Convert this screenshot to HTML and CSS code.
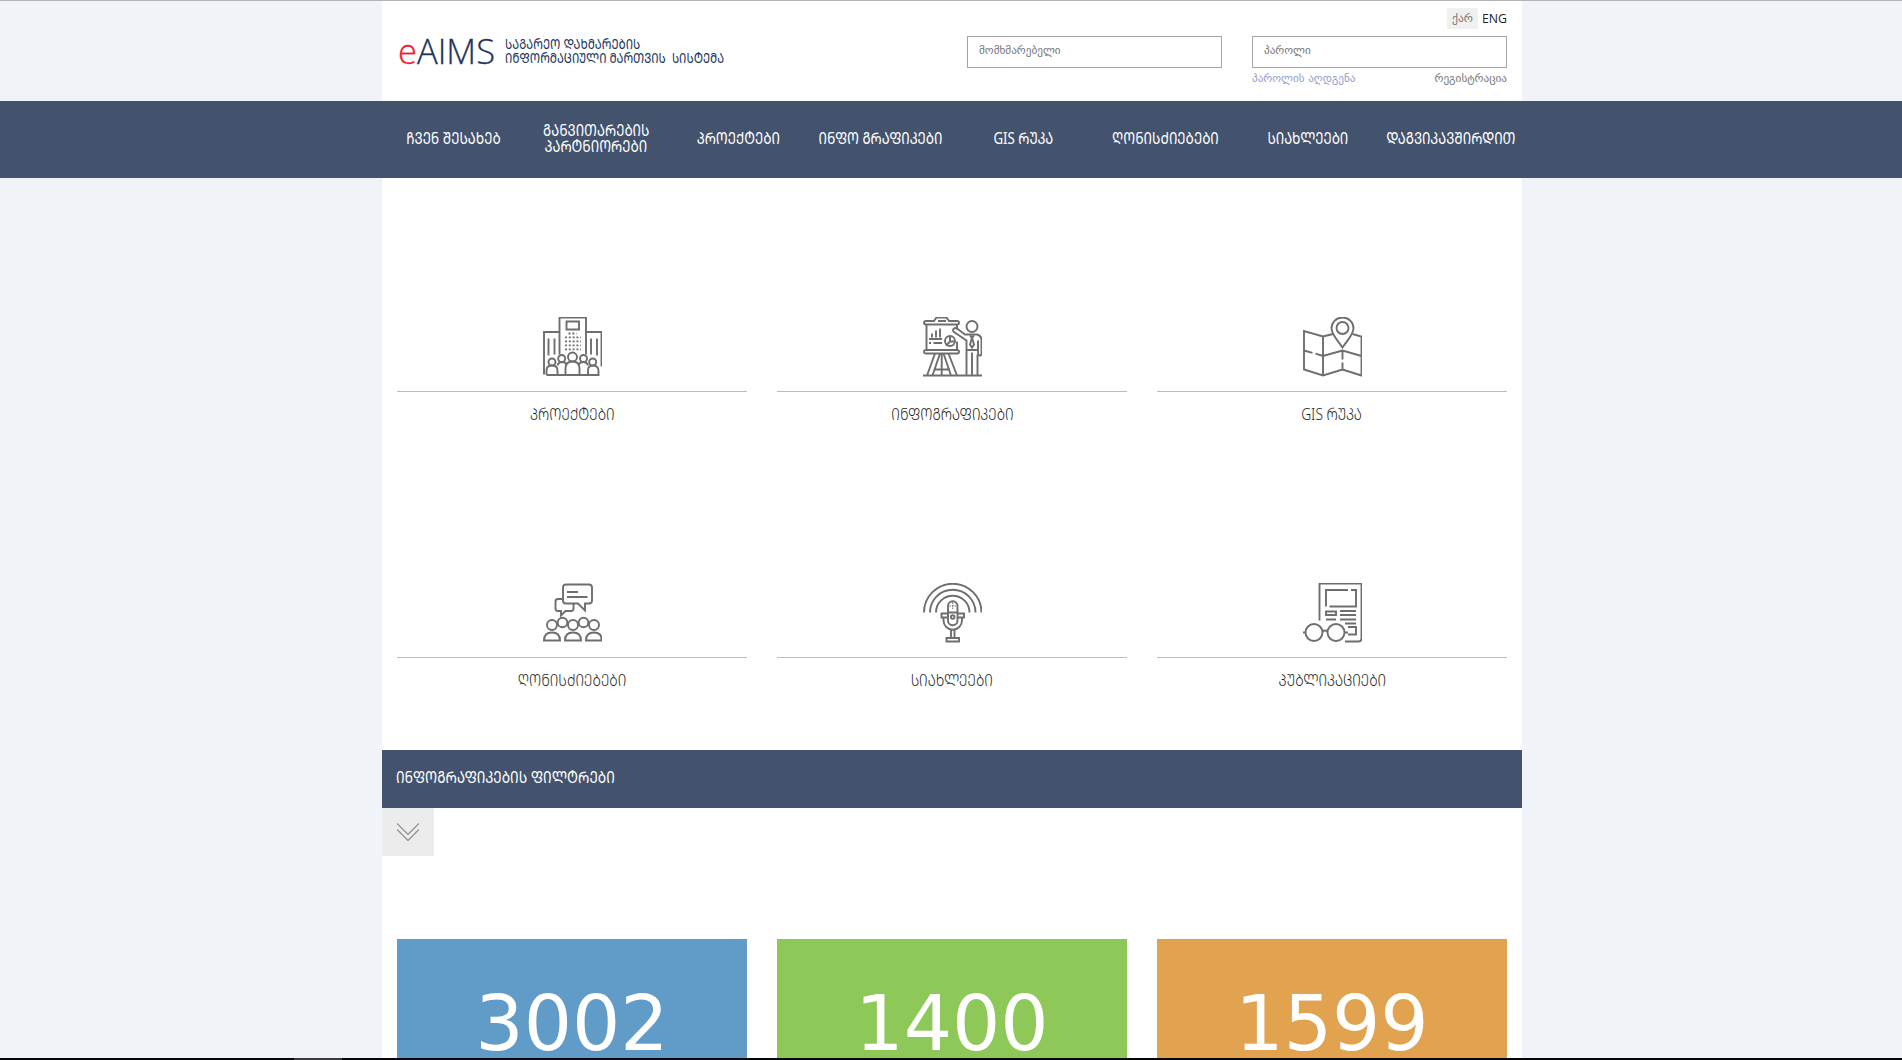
FILE: index.html
```
<!DOCTYPE html>
<html lang="ka">
<head>
<meta charset="utf-8">
<title>eAIMS</title>
<link rel="stylesheet" href="styles.css">
</head>
<body>
<header class="header container">
  <a class="logo">
    <span class="logo-name"><span class="logo-e">e</span>AIMS</span>
    <span class="logo-text"><span class="caps">ᲡᲐᲒᲐᲠᲔᲝ ᲓᲐᲮᲛᲐᲠᲔᲑᲘᲡ</span><span class="caps">ᲘᲜᲤᲝᲠᲛᲐᲪᲘᲣᲚᲘ ᲛᲐᲠᲗᲕᲘᲡ&nbsp; ᲡᲘᲡᲢᲔᲛᲐ</span></span>
  </a>
  <div class="account">
    <div class="lang"><a class="active">ქარ</a><a class="eng">ENG</a></div>
    <div class="fields">
      <input type="text" placeholder="მომხმარებელი">
      <input type="password" placeholder="პაროლი">
    </div>
    <div class="links"><a class="recover">პაროლის აღდგენა</a><a>რეგისტრაცია</a></div>
  </div>
</header>
<nav class="nav">
  <div class="container nav-grid">
    <a><span class="caps">ᲩᲕᲔᲜ ᲨᲔᲡᲐᲮᲔᲑ</span></a>
    <a><span class="caps">ᲒᲐᲜᲕᲘᲗᲐᲠᲔᲑᲘᲡ</span><span class="caps">ᲞᲐᲠᲢᲜᲘᲝᲠᲔᲑᲘ</span></a>
    <a><span class="caps">ᲞᲠᲝᲔᲥᲢᲔᲑᲘ</span></a>
    <a><span class="caps">ᲘᲜᲤᲝ ᲒᲠᲐᲤᲘᲙᲔᲑᲘ</span></a>
    <a><span class="caps">GIS ᲠᲣᲙᲐ</span></a>
    <a><span class="caps">ᲦᲝᲜᲘᲡᲫᲘᲔᲑᲔᲑᲘ</span></a>
    <a><span class="caps">ᲡᲘᲐᲮᲚᲔᲔᲑᲘ</span></a>
    <a><span class="caps">ᲓᲐᲒᲕᲘᲙᲐᲕᲨᲘᲠᲓᲘᲗ</span></a>
  </div>
</nav>
<main class="container main">
  <section class="tiles">
    <a class="tile">
      <svg viewBox="-1 .5 60 60"><path d="M16.500 38V1H43v37M16.500 15.500H1V58M43 15.500h15.500V50M23.500 5H36v8H23.500zM5.500 22v17M11.500 22v16M48 22v16M54 22v17"/><path class="dots" d="M25.500 17h8M22 20.900h16M22 24.900h16M22 28.900h16M22 32.900h16"/><circle cx="29.500" cy="40.500" r="4.500"/><circle cx="18.700" cy="42" r="3.500"/><circle cx="40.500" cy="42" r="3.500"/><circle cx="9" cy="45.500" r="3.500"/><circle cx="49.700" cy="45.500" r="3.500"/><path d="M3.500 58.500V54q0-5 5.500-5t5.500 5v4.500M14.500 49q1-3.500 4.500-3.500 3 0 4.500 2.500M35.500 48q1.500-2.500 5-2.500t4.500 3.500M22.500 58.500V52q0-7 7-7t7 7v6.500M45 58.500V54q0-5 5-5t5.500 5v4.500zM3.500 58.500H56"/></svg>
      <span class="label"><span class="caps">ᲞᲠᲝᲔᲥᲢᲔᲑᲘ</span></span>
    </a>
    <a class="tile">
      <svg viewBox="-1 .5 60 60"><path d="M11 4.500H3q-2 0-2 1.700T3 8h31q2 0 2-1.800t-2-1.700h-8L23.500 1h-10zM15 4.500h8M3.500 8v25.500M34 8v5M34 25v8.500M3 33.500h31q2 0 2 1.700T34 37H3q-2 0-2-1.800t2-1.700zM6 22.500h13M6 26.500h2M10.500 26.500H19M9 21v-4M13 21v-7M17 21v-9"/><circle cx="27" cy="24.500" r="5"/><path d="M27 19.500V25h5M27 25l-4 4M12 37 4 59M17 37 9.500 59M20.500 37 28 59M25.500 37 34 59M18.700 37v22M11 53h16M0 59h59M43.500 59V24L31 15.500q-2-2 0-3.500 1.500-1 3 0L42 18h12q4.500 1 4.500 6v13q0 2-1.700 2T55 37V24M54.500 38v21M49 36v23M44.500 33.500H55"/><circle cx="49" cy="10" r="5.500"/><path d="m47 19 2 2.500 2-2.500M49 21l-2 7 2 3 2-3z"/></svg>
      <span class="label"><span class="caps">ᲘᲜᲤᲝᲒᲠᲐᲤᲘᲙᲔᲑᲘ</span></span>
    </a>
    <a class="tile">
      <svg viewBox="-1 .5 60 60"><path d="M30 17.500 20 20 1 14.500V53l19 6 19.500-6L58.500 59V20l-9-2.500M20 20v39M1 34l8.500 2.300M12.500 37.200 20 39.500 39.500 34l19 5.500M39.500 34v9M39.500 46v7"/><path d="M39.500 31C34 23 28.500 18 28.500 11.500a11 10.500 0 0 1 22 0C50.500 18 45 23 39.500 31z"/><circle cx="39.500" cy="11.500" r="6"/></svg>
      <span class="label"><span class="caps">GIS ᲠᲣᲙᲐ</span></span>
    </a>
    <a class="tile">
      <svg viewBox="-1 .5 60 60"><path d="M23 2h23q3 0 3 3v13q0 3-3 3h-4v7l-7-7H23q-3 0-3-3V5q0-3 3-3zM24 9.500h11M24 14.500h20.500M20 16.500h-5q-2.500 0-2.500 2.500v7q0 2.500 2.500 2.500h3V33l4.500-4.500H28q2.500 0 2.500-2.500v-5"/><circle cx="9" cy="42.500" r="5"/><circle cx="30" cy="42.500" r="5"/><circle cx="51" cy="42.500" r="5"/><circle cx="19.500" cy="40" r="4.800"/><circle cx="40.500" cy="40" r="4.800"/><path d="M1 58q0-8 8-8t8 8zM22 58q0-8 8-8t8 8zM43 58q0-8 8-8t7.500 8z"/></svg>
      <span class="label"><span class="caps">ᲦᲝᲜᲘᲡᲫᲘᲔᲑᲔᲑᲘ</span></span>
    </a>
    <a class="tile">
      <svg viewBox="-1 .5 60 60"><path d="M1 30a28.500 28.500 0 0 1 57.500 0M7 30a22.500 22.500 0 0 1 45.500 0M13 30a16.500 16.500 0 0 1 33.500 0"/><path d="M25 38V23.500a4.700 4.700 0 0 1 9.500 0V38a4.700 4.700 0 0 1-9.500 0zM25 30h9.500M18.500 31H25v4h-6.500zM34.500 31H41v4h-6.500zM20.500 35v3a9.200 9.200 0 0 0 18.500 0v-3M28 47v8M31.500 47v8M23.500 59v-3.500H36V59z"/><circle cx="29.700" cy="34.500" r="1.800"/><path class="fine" d="M29.700 20v7M26.500 23.500h6.500"/></svg>
      <span class="label"><span class="caps">ᲡᲘᲐᲮᲚᲔᲔᲑᲘ</span></span>
    </a>
    <a class="tile">
      <svg viewBox="-1 .5 60 60"><path d="M16.500 38V1h42v55q0 3-3 3H42M45 7.500H23V24M26.500 24H53V7.500h-5M23 29h10v3.500H23zM37 28.500h16M37 32.500h16M23 37h10M37 37h16M42 41h11M45 44.500h8V52h-8"/><circle cx="11" cy="50" r="8.500"/><circle cx="33" cy="50" r="8.500"/><path d="M0 50h2M19.500 49q2.500-2 5 0M42 50h3"/></svg>
      <span class="label"><span class="caps">ᲞᲣᲑᲚᲘᲙᲐᲪᲘᲔᲑᲘ</span></span>
    </a>
  </section>
  <div class="filter-bar"><span class="caps">ᲘᲜᲤᲝᲒᲠᲐᲤᲘᲙᲔᲑᲘᲡ ᲤᲘᲚᲢᲠᲔᲑᲘ</span></div>
  <button class="toggle" aria-label="ფილტრები"><svg viewBox="0 0 22 18"><path d="M0 .5l11 11 11-11M0 6.500l11 11 11-11"/></svg></button>
  <section class="stats">
    <div class="stat blue">3002</div>
    <div class="stat green">1400</div>
    <div class="stat orange">1599</div>
  </section>
</main>
<footer class="edge"><span></span></footer>
</body>
</html>
```
FILE: styles.css
```
* { box-sizing: border-box; }
body {
  margin: 0;
  height: 1060px;
  overflow: hidden;
  display: flex;
  flex-direction: column;
  background: #f0f4f9;
  border-top: 1px solid #b3b3b5;
  font-family: "DejaVu Sans", sans-serif;
  color: #333;
}
.container { width: 1140px; margin: 0 0 0 382px; }
.caps {
  display: inline-block;
  white-space: nowrap;
  font-family: "Noto Sans", "Noto Sans Georgian", sans-serif;
  transform: scaleX(.78);
}
.header {
  flex: none;
  height: 100px;
  background: #fff;
  display: flex;
  justify-content: space-between;
  padding: 7px 15px 0;
}
.logo { display: flex; padding: 19px 0 0 1px; color: #1c355e; }
.logo-name {
  width: 107px;
  font: 300 34.500px/47px "Open Sans", sans-serif;
  -webkit-text-stroke: .3px;
  white-space: nowrap;
}
.logo-e { color: #ed1c2e; }
.logo-text { display: flex; flex-direction: column; padding-top: 10px; }
.logo-text .caps {
  transform: scaleX(.852);
  transform-origin: left;
  align-self: flex-start;
  font-size: 13.500px;
  line-height: 14px;
}
.account { width: 540px; font-size: 11.200px; color: #777; }
.lang { display: flex; justify-content: flex-end; gap: 4px; height: 21px; line-height: 21px; }
.lang .active { width: 31px; text-align: center; background: #f0f0f0; font-size: 11.500px; }
.eng { font: 12.300px/22px "Open Sans", sans-serif; color: #222; }
.fields { display: flex; justify-content: space-between; margin-top: 7px; }
input {
  width: 255px;
  height: 32px;
  border: 1px solid #a5a5a5;
  padding: 0 10px 3px 11px;
  font: 11.200px "DejaVu Sans", sans-serif;
}
input::placeholder { color: #757575; }
.links { display: flex; justify-content: space-between; margin-top: 3px; padding-left: 285px; line-height: 15px; }
.recover { color: #8f9dcc; }
.nav { flex: none; height: 77px; background: #43536d; color: #fff; }
.nav-grid { height: 77px; display: grid; grid-template-columns: repeat(8, minmax(0, 1fr)); }
.nav a {
  display: flex;
  flex-direction: column;
  justify-content: center;
  align-items: center;
  font-size: 17px;
  line-height: 16px;
  padding-bottom: 4px;
}
.main { flex: 1; min-height: 0; overflow: hidden; background: #fff; }
.tiles {
  height: 572px;
  padding: 139px 15px 0;
  display: grid;
  grid-template-columns: repeat(3, 350px);
  grid-auto-rows: 266px;
  column-gap: 30px;
}
.tile { display: flex; flex-direction: column; align-items: center; }
.tile svg { width: 60px; height: 60px; margin-bottom: 14px; fill: none; stroke: #6e6e6e; stroke-width: 1.900; }
.tile .dots { stroke-dasharray: 2 1.800; }
.tile .fine { stroke-width: 1; stroke-dasharray: 1.500 1; }
.label {
  width: 100%;
  border-top: 1px solid #bcbcbc;
  text-align: center;
  padding-top: 12px;
  font-size: 17px;
  line-height: 20px;
  color: #1c1c1c;
}
.label .caps { font-weight: 300; transform: scaleX(.81); }
.filter-bar {
  height: 58px;
  background: #43536d;
  color: #fff;
  padding: 0 14px;
  font-size: 17px;
  line-height: 54px;
}
.filter-bar .caps { transform: scaleX(.794); transform-origin: left; }
.toggle {
  display: flex;
  justify-content: center;
  align-items: center;
  width: 52px;
  height: 48px;
  border: 0;
  padding: 0;
  background: #ececec;
}
.toggle svg { width: 22px; height: 18px; fill: none; stroke: #8c8c8c; stroke-width: 1.200; }
.stats { display: grid; grid-template-columns: repeat(3, 350px); gap: 30px; padding: 83px 15px 0; }
.stat { height: 119px; padding-top: 51px; text-align: center; font-size: 76px; line-height: 68px; color: #fff; }
.blue { background: #619bc8; }
.green { background: #8dc859; }
.orange { background: #e2a350; }
.edge { flex: none; height: 2px; background: #05060a; }
.edge span { display: block; width: 48px; height: 2px; margin-left: 294px; background: #3c3c40; }
```
